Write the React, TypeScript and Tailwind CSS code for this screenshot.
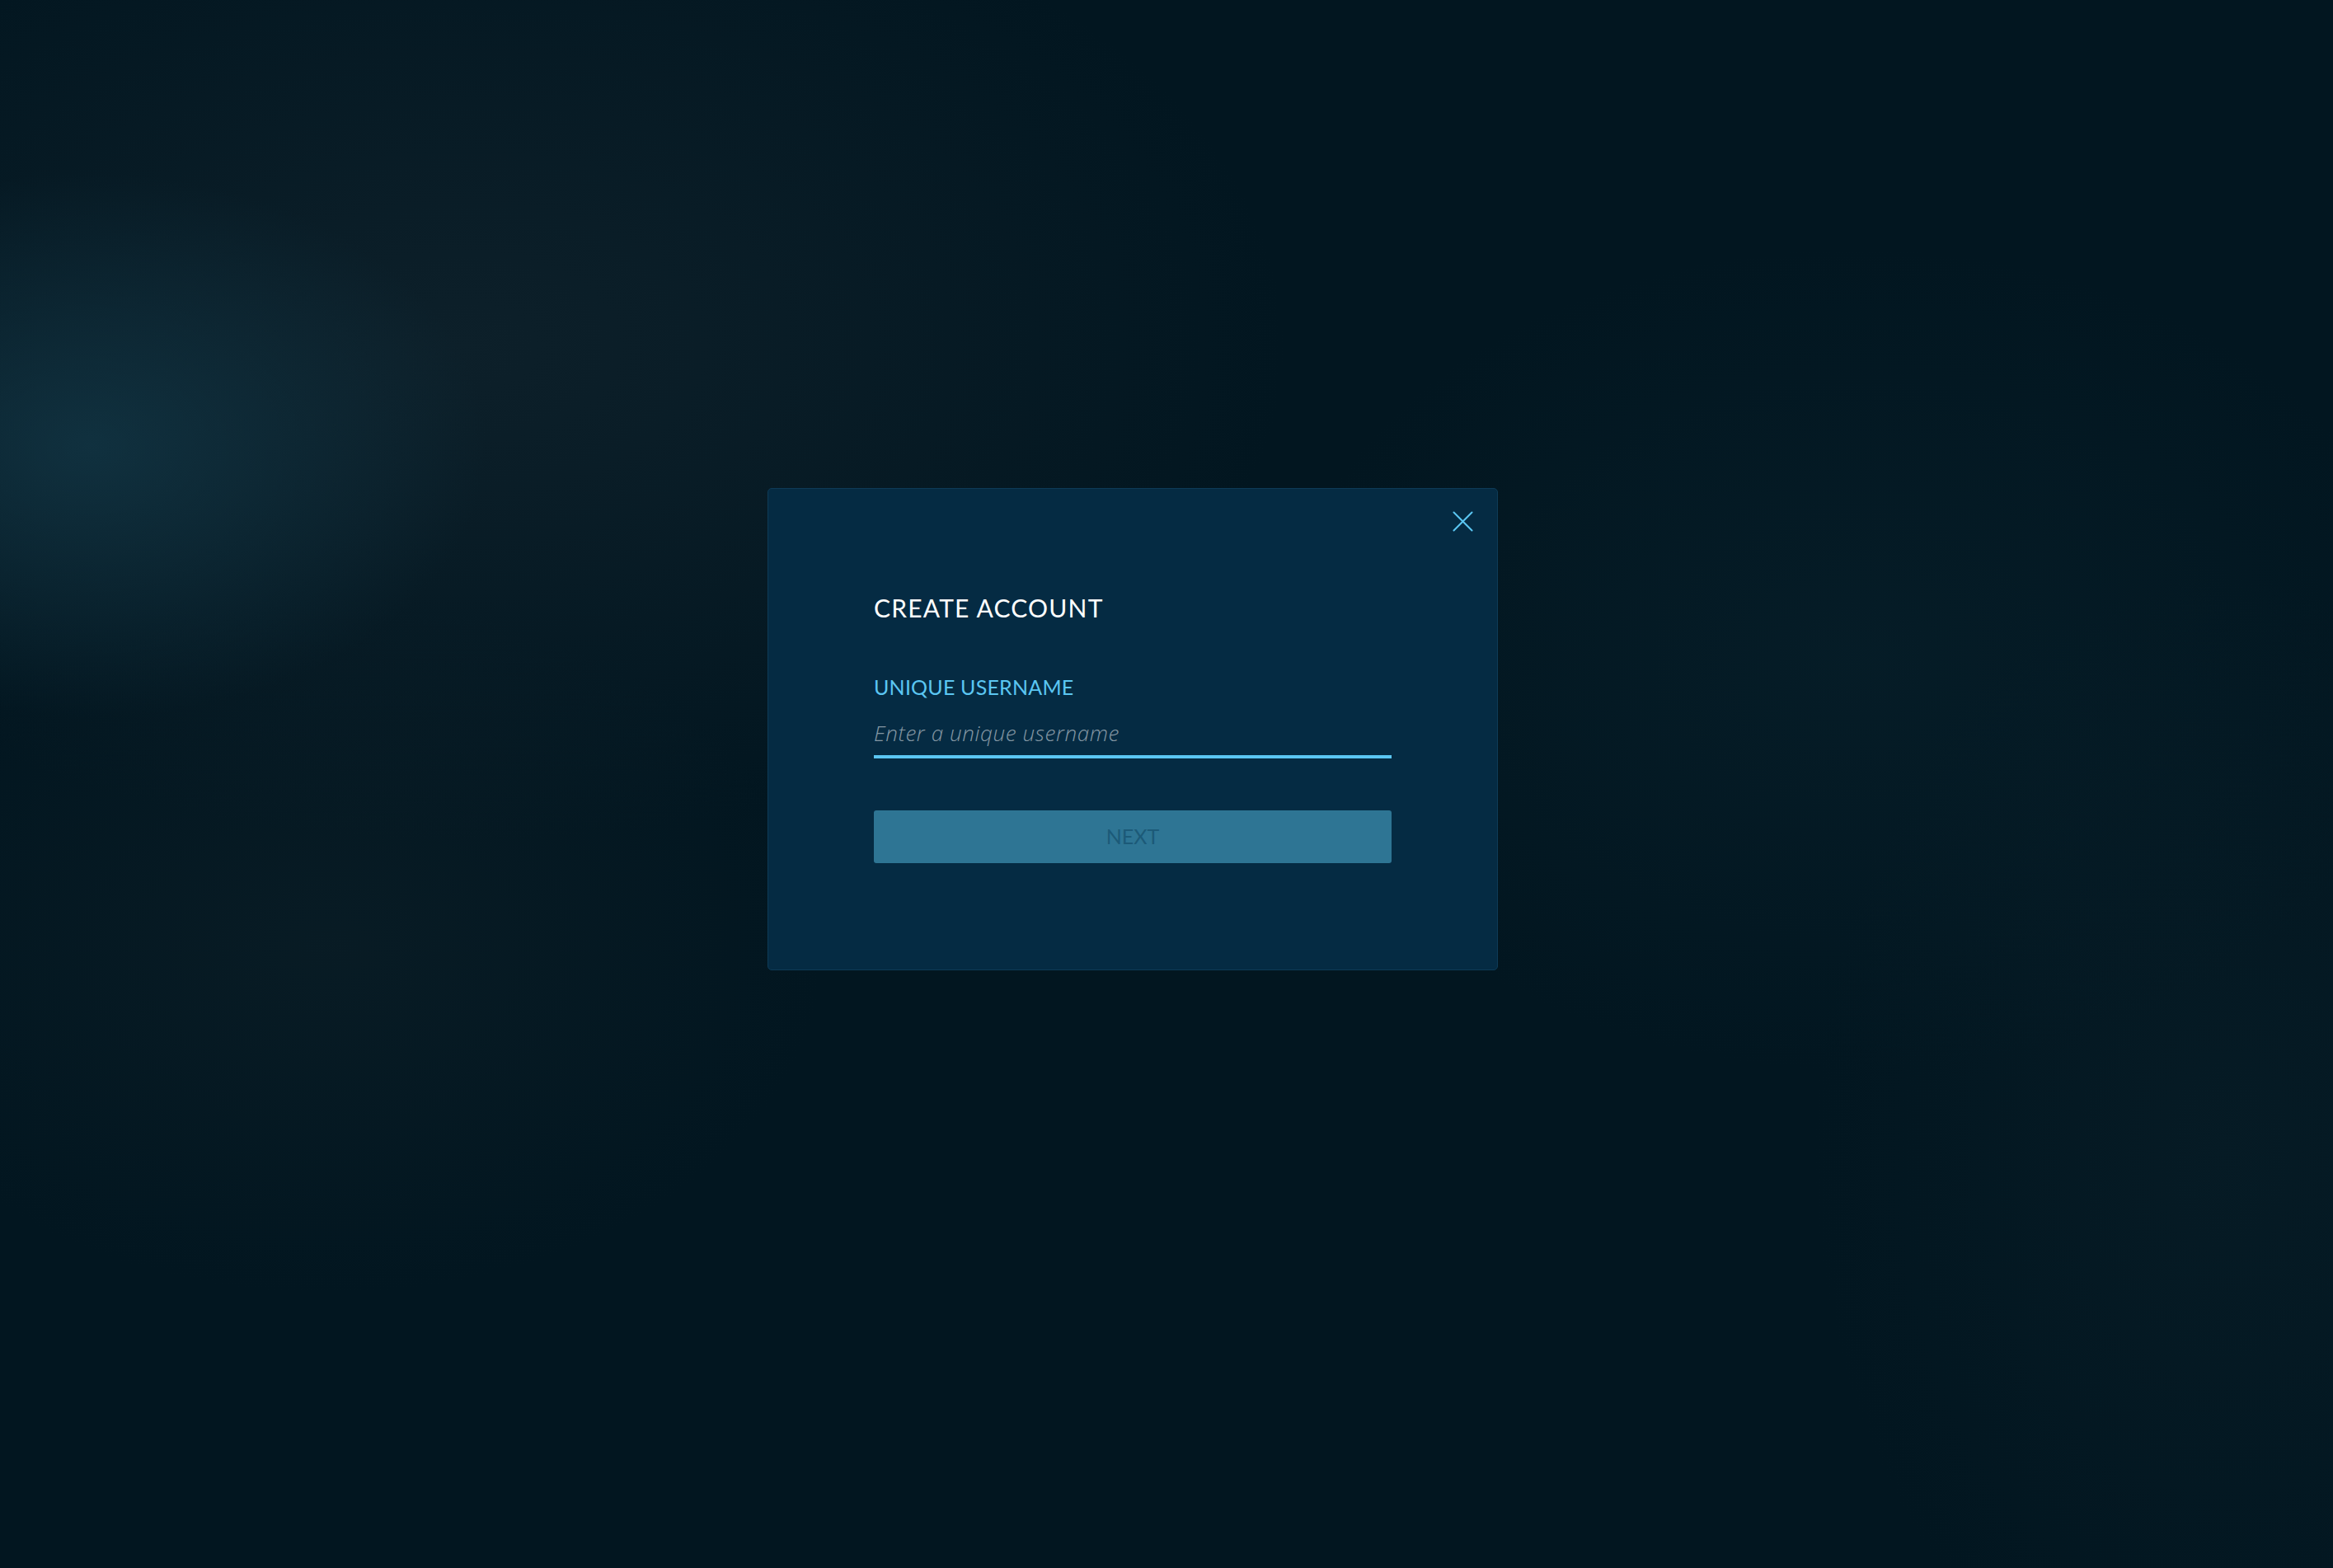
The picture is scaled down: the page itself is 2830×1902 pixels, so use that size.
export default function App() {
  return (
    <div className="min-h-screen w-full bg-[#021620] bg-[radial-gradient(ellipse_480px_330px_at_110px_540px,rgba(20,58,74,0.7),transparent),radial-gradient(ellipse_1000px_600px_at_560px_420px,rgba(22,40,50,0.55),transparent),radial-gradient(ellipse_700px_500px_at_2250px_800px,rgba(12,40,52,0.35),transparent),radial-gradient(ellipse_600px_420px_at_400px_1150px,rgba(16,34,42,0.45),transparent),radial-gradient(ellipse_500px_700px_at_2700px_1400px,rgba(12,34,44,0.4),transparent)] pt-[592px] pl-[931px] font-['Lato','Liberation_Sans',sans-serif]">
      <div className="relative w-[886px] h-[585px] rounded-[5px] border border-[#0e3b57] bg-[#052b43] px-[128px] pt-[129px]">
        <button className="absolute top-[27px] right-[29px] text-[#5bc6f2]">
          <svg width="25" height="25" viewBox="0 0 25 25" fill="none" stroke="currentColor" strokeWidth="2" strokeLinecap="round">
            <path d="M1.5 1.5 L23.5 23.5 M23.5 1.5 L1.5 23.5" />
          </svg>
        </button>

        <h1 className="text-[30px] leading-none text-white tracking-[1.2px]">CREATE ACCOUNT</h1>

        <label className="block mt-[69px] text-[25px] leading-none text-[#5bc6f2] tracking-[0.2px]">UNIQUE USERNAME</label>

        <input
          type="text"
          placeholder="Enter a unique username"
          className="mt-[30px] block w-full h-[44px] pb-[15px] bg-transparent border-b-4 border-[#5bc6f2] text-[26px] leading-none italic font-light tracking-[0.6px] text-white outline-none placeholder:text-[#8497a3] font-['Open_Sans',sans-serif]"
        />

        <button className="mt-[63px] w-full h-[64px] rounded-[3px] bg-[#2e7594] text-[25px] text-[#1c5a78]">
          NEXT
        </button>
      </div>
    </div>
  );
}
